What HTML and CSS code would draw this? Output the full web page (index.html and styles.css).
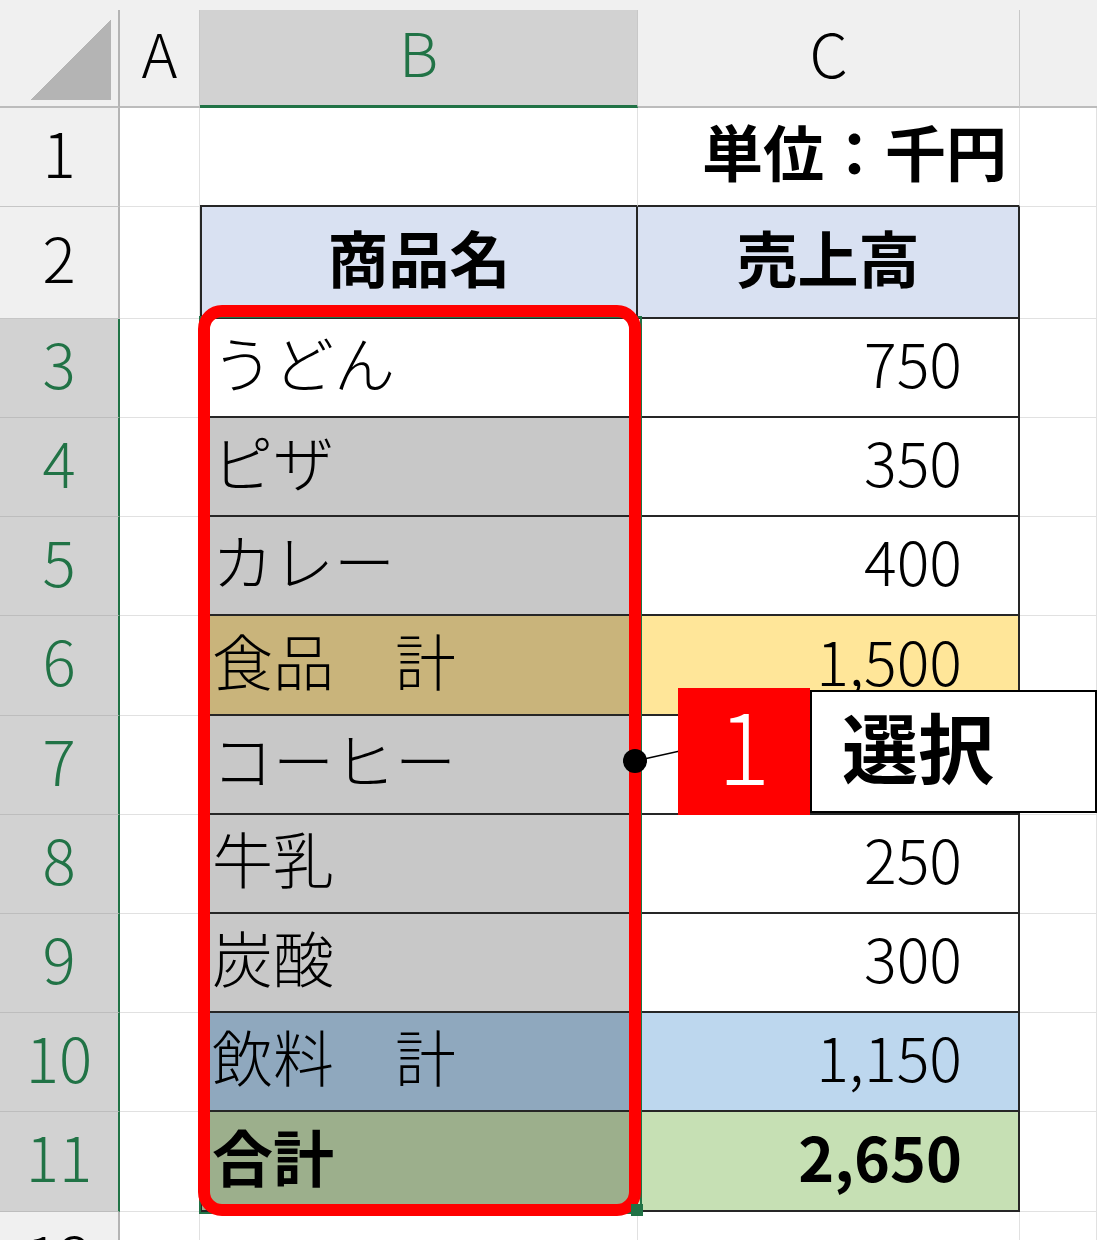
FILE: index.html
```html
<!DOCTYPE html>
<html lang="ja">
<head>
    <meta charset="UTF-8">
    <meta name="viewport" content="width=device-width, initial-scale=1.0">
    <title>売上高 | 商品名を選択</title>
    <link rel="stylesheet" href="styles.css">
</head>
<body>

    <div class="sheet">
        <div class="strip"></div>

        <!-- 列見出し -->
        <div class="corner"><span class="tri"></span></div>
        <div class="ch">A</div>
        <div class="ch on">B</div>
        <div class="ch">C</div>
        <div class="ch last"></div>

        <!-- 1行目 -->
        <div class="rh">1</div>
        <div class="c"></div>
        <div class="c above"></div>
        <div class="c above unit">単位：千円</div>
        <div class="c"></div>

        <!-- 2行目：見出し -->
        <div class="rh">2</div>
        <div class="c"></div>
        <div class="c t l hd">商品名</div>
        <div class="c t hd">売上高</div>
        <div class="c"></div>

        <!-- 3〜11行目 -->
        <div class="rh on">3</div>
        <div class="c"></div>
        <div class="c t l name">うどん</div>
        <div class="c t num">750</div>
        <div class="c"></div>

        <div class="rh on">4</div>
        <div class="c"></div>
        <div class="c t l name g">ピザ</div>
        <div class="c t num">350</div>
        <div class="c"></div>

        <div class="rh on">5</div>
        <div class="c"></div>
        <div class="c t l name g">カレー</div>
        <div class="c t num">400</div>
        <div class="c"></div>

        <div class="rh on">6</div>
        <div class="c"></div>
        <div class="c t l name tan">食品　計</div>
        <div class="c t num yel">1,500</div>
        <div class="c"></div>

        <div class="rh on">7</div>
        <div class="c"></div>
        <div class="c t l name g">コーヒー</div>
        <div class="c t num"></div>
        <div class="c"></div>

        <div class="rh on">8</div>
        <div class="c"></div>
        <div class="c t l name g">牛乳</div>
        <div class="c t num">250</div>
        <div class="c"></div>

        <div class="rh on">9</div>
        <div class="c"></div>
        <div class="c t l name g">炭酸</div>
        <div class="c t num">300</div>
        <div class="c"></div>

        <div class="rh on">10</div>
        <div class="c"></div>
        <div class="c t l name steel">飲料　計</div>
        <div class="c t num sky">1,150</div>
        <div class="c"></div>

        <div class="rh on">11</div>
        <div class="c"></div>
        <div class="c t l name olive bold">合計</div>
        <div class="c t num lime bold">2,650</div>
        <div class="c"></div>

        <!-- 12行目（見切れ） -->
        <div class="rh">12</div>
        <div class="c"></div>
        <div class="c"></div>
        <div class="c"></div>
        <div class="c"></div>

        <!-- 選択範囲と注釈 -->
        <div class="sel"></div>
        <div class="ring"></div>
        <div class="handle"></div>

        <svg class="leader" width="60" height="40" viewBox="0 0 60 40">
            <line x1="15" y1="21" x2="60" y2="11" stroke="#000" stroke-width="1.5"/>
            <circle cx="15" cy="21" r="12" fill="#000"/>
        </svg>

        <div class="callout">
            <div class="step">1</div>
            <div class="label">選択</div>
        </div>
    </div>

</body>
</html>
```

FILE: styles.css
```css
/* 基本 */
:root {
    --green: #217346;
    --line: #262626;
    --grid: #e1e1e1;
    --head: #f0f0f0;
    --head-on: #d2d2d2;
}

* { margin: 0; padding: 0; box-sizing: border-box; }
html, body { width: 1097px; height: 1240px; overflow: hidden; background: #fff; }
body { font-family: "Noto Sans CJK JP", "Noto Sans", sans-serif; color: #000; }

/* シート全体 */
.sheet {
    position: relative;
    display: grid;
    grid-template-columns: 120px 80px 438px 382px 1fr;
    grid-template-rows: 10px 98px 99px 112px 99px 99px 99px 100px 99px 99px 99px 99px 100px 99px;
}

.strip { grid-column: 1 / -1; background: var(--head); }

/* 見出し */
.corner {
    background: var(--head);
    border-right: 2px solid #b4b4b4;
    border-bottom: 2px solid #bcbcbc;
    display: flex;
    justify-content: flex-end;
    align-items: flex-end;
    padding: 0 7px 6px 0;
}
.tri { width: 80px; height: 80px; background: linear-gradient(to bottom right, transparent 50%, #b4b4b4 50%); }

.ch {
    background: var(--head);
    border-right: 1px solid #c8c8c8;
    border-bottom: 2px solid #bcbcbc;
    display: flex;
    justify-content: center;
    align-items: center;
    font-size: 61px;
    font-weight: 300;
    line-height: 1;
    padding-bottom: 14px;
}
.ch.on { background: var(--head-on); color: var(--green); border-bottom: 3px solid var(--green); }
.ch.last { border-right: none; }

.rh {
    background: var(--head);
    border-right: 2px solid #b4b4b4;
    border-bottom: 1px solid #c6c6c6;
    display: flex;
    justify-content: center;
    align-items: center;
    font-size: 62px;
    font-weight: 300;
    line-height: 1;
    padding-bottom: 13px;
}
.rh.on { background: var(--head-on); color: var(--green); border-right-color: var(--green); border-bottom-color: #bdbdbd; }

/* セル */
.c {
    border-right: 1px solid var(--grid);
    border-bottom: 1px solid var(--grid);
    display: flex;
    align-items: center;
    font-size: 61px;
    font-weight: 300;
    line-height: 1;
    white-space: nowrap;
    padding-bottom: 12px;
}
.above { border-bottom: 2px solid var(--line); }
.t { border-right: 2px solid var(--line); border-bottom: 2px solid var(--line); }
.t.l { border-left: 2px solid var(--line); }

.hd { background: #d9e1f2; justify-content: center; font-weight: 700; }
.unit { justify-content: flex-end; padding-right: 12px; font-weight: 700; }
.name { padding-left: 10px; }
.num { justify-content: flex-end; padding-right: 56px; }
.bold { font-weight: 700; }

/* 塗りつぶし（B列は選択中で暗い） */
.g { background: #c8c8c8; }
.tan { background: #c9b47b; }
.steel { background: #8fa8be; }
.olive { background: #9caf8c; }
.yel { background: #ffe699; }
.sky { background: #bdd7ee; }
.lime { background: #c6e0b4; }

/* 選択範囲 */
.sel { position: absolute; left: 199px; top: 316px; width: 443px; height: 898px; border: 2px solid var(--green); }
.ring { position: absolute; left: 198px; top: 305px; width: 443px; height: 911px; border: 12px solid #ff0000; border-radius: 24px; }
.handle { position: absolute; left: 631px; top: 1204px; width: 12px; height: 12px; background: var(--green); }

/* 注釈 */
.leader { position: absolute; left: 620px; top: 740px; }

.callout { position: absolute; left: 678px; top: 688px; display: flex; align-items: flex-start; }
.step {
    width: 132px;
    height: 127px;
    background: #ff0000;
    color: #fff;
    display: flex;
    justify-content: center;
    align-items: center;
    font-size: 98px;
    font-weight: 300;
    line-height: 1;
    padding-bottom: 20px;
}
.label {
    width: 287px;
    height: 123px;
    margin-top: 2px;
    background: #fff;
    border: 2px solid #000;
    display: flex;
    align-items: center;
    padding: 0 0 14px 30px;
    font-size: 76px;
    font-weight: 700;
    line-height: 1;
}
```
